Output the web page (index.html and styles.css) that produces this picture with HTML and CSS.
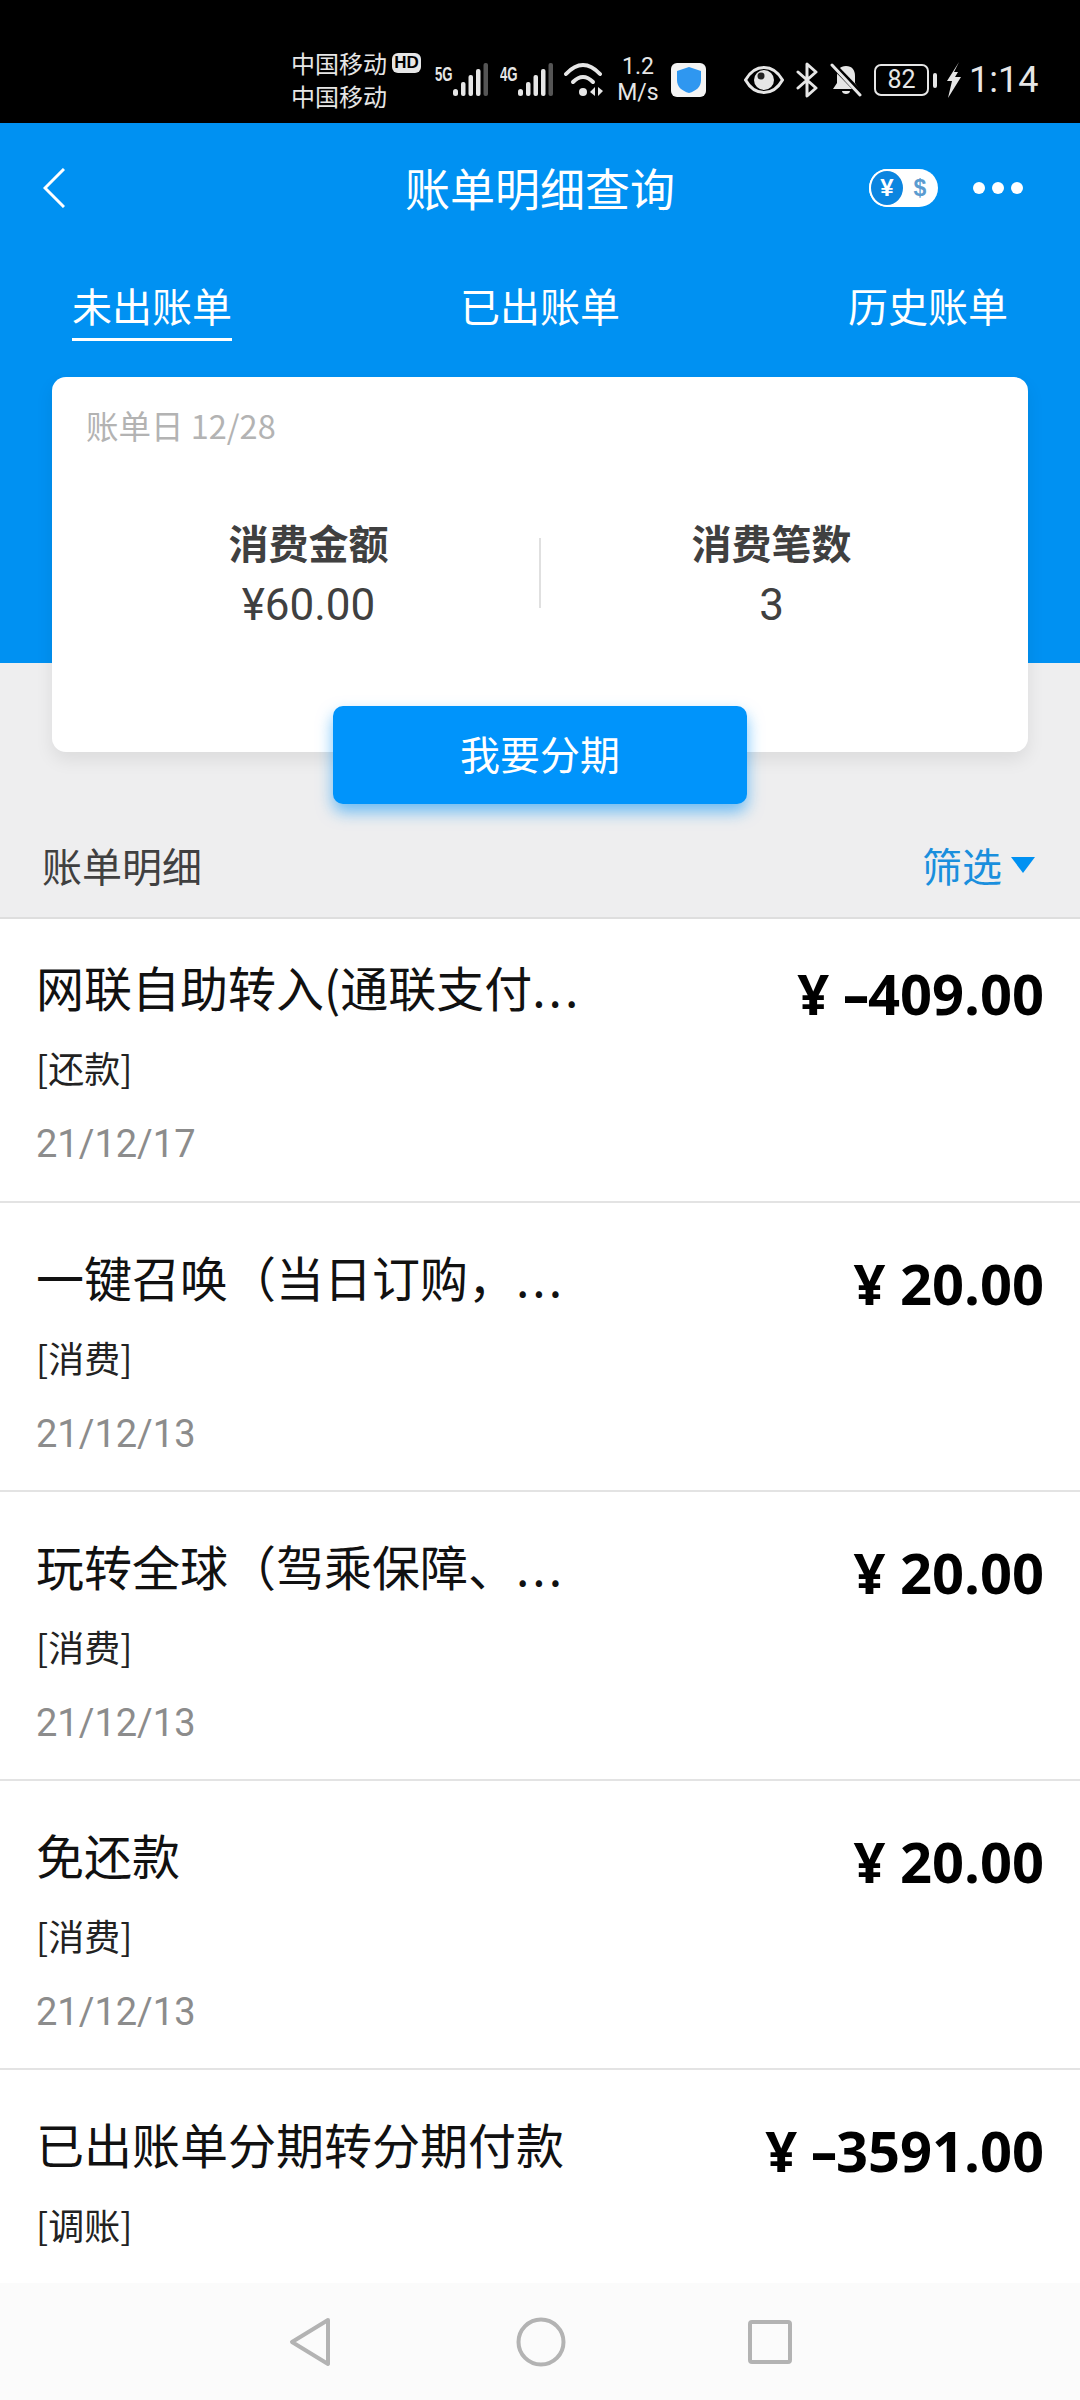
FILE: index.html
```html
<!DOCTYPE html>
<html>

<head>
  <title>账单明细查询</title>
  <link rel="stylesheet" href="styles.css">
</head>

<body>
  <div class="screen">
    <div class="status-bar">
      <div class="carriers">
        <div class="carrier-line">中国移动<span class="hd">HD</span></div>
        <div class="carrier-line">中国移动</div>
      </div>
      <div class="signal">
        <span class="net">5G</span>
        <svg width="35" height="34" viewBox="0 0 35 34"><g fill="#e6e6e6"><rect x="0" y="26" width="5" height="7" rx="2.500"/><rect x="8" y="19" width="4.500" height="14" rx="2"/><rect x="15.500" y="12" width="4.500" height="21" rx="2"/><rect x="23" y="6" width="4.500" height="27" rx="2"/></g><rect x="30.500" y="0" width="4.500" height="33" rx="2" fill="#555"/></svg>
      </div>
      <div class="signal">
        <span class="net">4G</span>
        <svg width="35" height="34" viewBox="0 0 35 34"><g fill="#e6e6e6"><rect x="0" y="26" width="5" height="7" rx="2.500"/><rect x="8" y="19" width="4.500" height="14" rx="2"/><rect x="15.500" y="12" width="4.500" height="21" rx="2"/><rect x="23" y="6" width="4.500" height="27" rx="2"/></g><rect x="30.500" y="0" width="4.500" height="33" rx="2" fill="#555"/></svg>
      </div>
      <svg class="wifi" width="40" height="36" viewBox="0 0 40 36"><g fill="none" stroke="#e6e6e6" stroke-width="4" stroke-linecap="round"><path d="M2 12Q19-6 36 12"/><path d="M9 20Q19 10 29 20"/></g><circle cx="19" cy="30" r="4" fill="#e6e6e6"/><path d="M31 25v9l-5-4zM34 25v9l5-5z" fill="#e6e6e6"/></svg>
      <div class="speed"><div>1.2</div><div>M/s</div></div>
      <div class="shield-app">
        <svg width="26" height="28" viewBox="0 0 26 28"><path d="M13 1 25 5v9c0 7-5 11-12 13C6 25 1 21 1 14V5z" fill="#2f97f0"/></svg>
      </div>
      <svg class="eye" width="40" height="28" viewBox="0 0 40 28"><path d="M1.500 14C6 6 12 1.500 20 1.500S34 6 38.500 14C34 22 28 26.500 20 26.500S6 22 1.500 14z" fill="none" stroke="#e6e6e6" stroke-width="3"/><circle cx="20" cy="14" r="10" fill="#e6e6e6"/><circle cx="17" cy="10" r="3.500" fill="#222"/></svg>
      <svg class="bt" width="22" height="36" viewBox="0 0 22 36"><path d="M2 10 20 26 11 34V2l9 8L2 26" fill="none" stroke="#e6e6e6" stroke-width="3" stroke-linejoin="round" stroke-linecap="round"/></svg>
      <svg class="bell" width="32" height="34" viewBox="0 0 32 34"><path d="M16 3c6 0 9 4 9 10v7l4 6H3l4-6v-7c0-6 3-10 9-10z" fill="#e6e6e6"/><path d="M12 28h8c0 4-8 4-8 0z" fill="#e6e6e6"/><path d="M1 0 32 32" stroke="#000" stroke-width="6"/><path d="M2 2 30 32" stroke="#e6e6e6" stroke-width="3" stroke-linecap="round"/></svg>
      <div class="battery"><span class="battery-box">82</span><span class="battery-tip"></span></div>
      <svg class="bolt" width="15" height="36" viewBox="0 0 15 36"><path d="M13 0 1 19h5L2 36 15 15H9l3-5H8z" fill="#e6e6e6"/></svg>
      <div class="clock">1:14</div>
    </div>

    <div class="blue-head">
      <div class="nav-bar">
        <svg class="back" width="22" height="40" viewBox="0 0 22 40"><path d="M21 1 2 20l19 19" fill="none" stroke="#fff" stroke-width="3"/></svg>
        <div class="nav-title">账单明细查询</div>
        <div class="nav-right">
          <div class="currency">
            <span class="currency-on">¥</span>
            <span class="currency-off">$</span>
          </div>
          <div class="more"><i></i><i></i><i></i></div>
        </div>
      </div>
      <div class="tabs">
        <div class="tab active">未出账单</div>
        <div class="tab">已出账单</div>
        <div class="tab">历史账单</div>
      </div>
      <div class="summary-card">
        <div class="bill-day">账单日 12/28</div>
        <div class="totals">
          <div class="total">
            <div class="total-label">消费金额</div>
            <div class="total-value">¥60.00</div>
          </div>
          <div class="total-line"></div>
          <div class="total">
            <div class="total-label">消费笔数</div>
            <div class="total-value">3</div>
          </div>
        </div>
      </div>
      <div class="split-btn">我要分期</div>
    </div>

    <div class="section-head">
      <div class="section-title">账单明细</div>
      <div class="filter">筛选<span class="filter-arrow"></span></div>
    </div>

    <div class="list">
      <div class="row">
        <div class="row-top">
          <div class="row-name">网联自助转入(通联支付<span class="dots">...</span></div>
          <div class="row-amount">¥ <span class="minus">-</span>409.00</div>
        </div>
        <div class="row-type">[还款]</div>
        <div class="row-date">21/12/17</div>
      </div>
      <div class="row">
        <div class="row-top">
          <div class="row-name">一键召唤（当日订购，<span class="dots">...</span></div>
          <div class="row-amount">¥ 20.00</div>
        </div>
        <div class="row-type">[消费]</div>
        <div class="row-date">21/12/13</div>
      </div>
      <div class="row">
        <div class="row-top">
          <div class="row-name">玩转全球（驾乘保障、<span class="dots">...</span></div>
          <div class="row-amount">¥ 20.00</div>
        </div>
        <div class="row-type">[消费]</div>
        <div class="row-date">21/12/13</div>
      </div>
      <div class="row">
        <div class="row-top">
          <div class="row-name">免还款</div>
          <div class="row-amount">¥ 20.00</div>
        </div>
        <div class="row-type">[消费]</div>
        <div class="row-date">21/12/13</div>
      </div>
      <div class="row">
        <div class="row-top">
          <div class="row-name">已出账单分期转分期付款</div>
          <div class="row-amount">¥ <span class="minus">-</span>3591.00</div>
        </div>
        <div class="row-type">[调账]</div>
      </div>
    </div>

    <div class="nav-keys">
      <svg class="key-back" width="42" height="50" viewBox="0 0 42 50"><path d="M39 3 3 25l36 22z" fill="none" stroke="#b3b3b3" stroke-width="4" stroke-linejoin="round"/></svg>
      <svg width="50" height="50" viewBox="0 0 50 50"><circle cx="25" cy="25" r="22.500" fill="none" stroke="#b3b3b3" stroke-width="4"/></svg>
      <svg width="44" height="44" viewBox="0 0 44 44"><rect x="2" y="2" width="40" height="40" rx="2" fill="none" stroke="#b3b3b3" stroke-width="4"/></svg>
    </div>
  </div>
</body>

</html>
```

FILE: styles.css
```css
* {
  box-sizing: border-box;
}

html,
body {
  margin: 0;
  padding: 0;
}

body {
  font-family: "Noto Sans CJK SC", "Noto Sans", sans-serif;
  background-color: #fff;
}

.screen {
  width: 1080px;
  height: 2400px;
  overflow: hidden;
  display: flex;
  flex-direction: column;
  background-color: #eeeeef;
}

/* status bar */
.status-bar {
  height: 123px;
  flex-shrink: 0;
  background-color: #000;
  color: #e6e6e6;
  display: flex;
  align-items: center;
  padding: 37px 0 0 291px;
}

.carriers {
  width: 132px;
  font-size: 24px;
  margin-top: -2px;
}

.carrier-line {
  display: flex;
  align-items: center;
  white-space: nowrap;
  height: 33px;
  line-height: 33px;
}

.hd {
  width: 29px;
  height: 20px;
  margin-left: 5px;
  background-color: #e6e6e6;
  color: #000;
  font-family: "Liberation Sans", sans-serif;
  font-size: 17px;
  font-weight: bold;
  line-height: 20px;
  text-align: center;
  border-radius: 6px;
}

.signal {
  display: flex;
  align-items: flex-end;
  margin-left: 12px;
}

.net {
  width: 18px;
  align-self: flex-start;
  font-family: "Liberation Sans", sans-serif;
  font-size: 20px;
  line-height: 22px;
  font-weight: bold;
  transform: scaleX(0.66);
  transform-origin: left;
}

.wifi {
  margin-left: 11px;
}

.speed {
  width: 44px;
  margin-left: 12px;
  text-align: center;
  font-family: "Roboto", sans-serif;
  font-size: 23px;
  line-height: 26px;
}

.shield-app {
  width: 35px;
  height: 34px;
  margin-left: 11px;
  background-color: #f4f4f4;
  border-radius: 6px;
  display: flex;
  align-items: center;
  justify-content: center;
}

.eye {
  margin-left: 38px;
}

.bt {
  margin-left: 12px;
}

.bell {
  margin-left: 12px;
}

.battery {
  display: flex;
  align-items: center;
  margin-left: 12px;
}

.battery-box {
  width: 55px;
  height: 32px;
  border: 2px solid #e6e6e6;
  border-radius: 7px;
  text-align: center;
  font-family: "Roboto", sans-serif;
  font-size: 25px;
  line-height: 28px;
}

.battery-tip {
  width: 4px;
  height: 15px;
  margin-left: 4px;
  border-radius: 2px;
  background-color: #e6e6e6;
}

.bolt {
  margin-left: 9px;
}

.clock {
  font-family: "Roboto", sans-serif;
  font-size: 36px;
  line-height: 40px;
  margin-left: 8px;
}

/* blue header */
.blue-head {
  height: 540px;
  flex-shrink: 0;
  background-color: #0091f2;
  color: #fff;
}

.nav-bar {
  height: 130px;
  display: grid;
  grid-template-columns: 1fr auto 1fr;
  align-items: center;
  padding: 0 57px;
}

.back {
  margin-left: -14px;
}

.nav-title {
  font-size: 45px;
  line-height: 54px;
}

.nav-right {
  display: flex;
  justify-content: flex-end;
  align-items: center;
}

.currency {
  width: 69px;
  height: 38px;
  border-radius: 19px;
  background-color: #fff;
  display: flex;
  align-items: center;
}

.currency-on {
  width: 36px;
  height: 38px;
  border: 2px solid #fff;
  border-radius: 50%;
  background-color: #0b85e0;
  color: #fff;
  font-family: "Liberation Sans", sans-serif;
  font-size: 24px;
  font-weight: bold;
  line-height: 33px;
  text-align: center;
}

.currency-off {
  width: 30px;
  text-align: center;
  font-family: "Liberation Sans", sans-serif;
  font-size: 23px;
  font-weight: bold;
  color: #5a9bd0;
}

.more {
  display: flex;
  gap: 7px;
  margin-left: 35px;
}

.more i {
  display: block;
  width: 12px;
  height: 12px;
  border-radius: 50%;
  background-color: #fff;
}

.tabs {
  display: flex;
  justify-content: space-between;
  padding: 28px 72px 0;
}

.tab {
  font-size: 40px;
  line-height: 48px;
  padding-bottom: 9px;
  border-bottom: 3px solid transparent;
}

.tab.active {
  border-bottom-color: #fff;
}

/* summary card */
.summary-card {
  width: 976px;
  height: 375px;
  margin: 36px 0 0 52px;
  padding-top: 28px;
  background-color: #fff;
  border-radius: 14px;
  box-shadow: 0 8px 18px rgba(0, 0, 0, 0.08);
}

.bill-day {
  margin-left: 34px;
  font-size: 32.500px;
  line-height: 40px;
  color: #b3b3b3;
}

.totals {
  display: flex;
  align-items: center;
  margin-top: 69px;
  padding: 0 26px;
}

.total {
  flex: 1;
  text-align: center;
}

.total-label {
  font-size: 40px;
  line-height: 56px;
  font-weight: bold;
  color: #404040;
}

.total-value {
  font-family: "Roboto", "Noto Sans CJK SC", sans-serif;
  font-size: 44px;
  line-height: 62px;
  margin-top: 4px;
  color: #404040;
}

.total-line {
  width: 2px;
  height: 70px;
  margin-bottom: 4px;
  background-color: #e0e0e0;
}

.split-btn {
  width: 414px;
  height: 98px;
  margin: -46px 0 0 333px;
  border-radius: 10px;
  background-color: #0094fb;
  color: #fff;
  font-size: 40px;
  line-height: 94px;
  text-align: center;
  box-shadow: 0 8px 16px rgba(0, 145, 247, 0.55);
}

/* detail list */
.section-head {
  height: 254px;
  flex-shrink: 0;
  display: flex;
  align-items: flex-end;
  justify-content: space-between;
  padding: 0 45px 27px 42px;
}

.section-title {
  font-size: 40px;
  line-height: 50px;
  color: #404040;
}

.filter {
  display: flex;
  align-items: center;
  font-size: 40px;
  line-height: 50px;
  color: #1a8fdd;
}

.filter-arrow {
  width: 0;
  height: 0;
  margin-left: 9px;
  border-left: 12px solid transparent;
  border-right: 12px solid transparent;
  border-top: 16px solid #0091f2;
}

.list {
  flex: 1;
  min-height: 0;
  overflow: hidden;
  background-color: #fff;
  border-top: 2px solid #dedede;
}

.row {
  height: 289px;
  padding: 46px 36px 0;
  border-bottom: 2px solid #e3e3e3;
}

.row:first-child {
  height: 284px;
  padding-top: 40px;
}

.row-top {
  display: flex;
  justify-content: space-between;
  height: 90px;
}

.row-name {
  font-size: 48px;
  line-height: 54px;
  color: #111;
}

.dots {
  letter-spacing: 3px;
}

.row-amount {
  font-family: "Open Sans", "Noto Sans CJK SC", sans-serif;
  font-size: 56px;
  font-weight: bold;
  line-height: 68px;
  color: #000;
}

.minus {
  display: inline-block;
  margin: 0 3px;
  transform: scaleX(1.5);
}

.row-type {
  font-size: 36px;
  line-height: 36px;
  color: #222;
}

.row-date {
  font-family: "Roboto", sans-serif;
  font-size: 38px;
  line-height: 50px;
  margin-top: 34px;
  color: #8c8c8c;
}

.nav-keys {
  height: 117px;
  flex-shrink: 0;
  background-color: #fbfbfb;
  display: flex;
  align-items: center;
  justify-content: center;
  gap: 182px;
}

.key-back {
  margin-right: 3px;
}
```
